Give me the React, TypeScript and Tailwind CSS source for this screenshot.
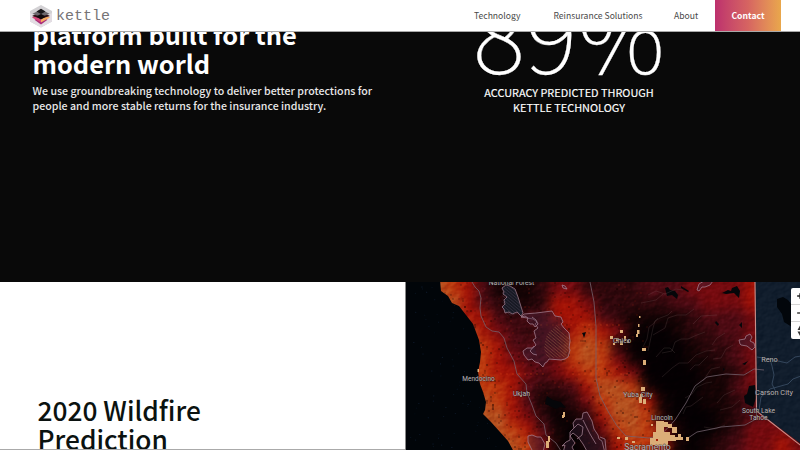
import React from "react";

const CJK = "font-['Noto_Sans_CJK_JP','Noto_Sans_CJK_SC',sans-serif]";

const LAND =
  "M440 280 L441 291 L448 296 L452 303 L459 306 L466 315 L473 324 L476 332 L479 340 L481 352 L480 362 L478 372 L480 384 L483 392 L486 402 L485 410 L483 414 L491 422 L500 432 L508 441 L514 452 L805 452 L805 447 L757 411 L755 280 Z";

const noise = (i: number) => {
  const v = Math.sin(i * 127.1 + 11.7) * 43758.5453;
  return v - Math.floor(v);
};

const stars = Array.from({ length: 100 }, (_, i) => ({
  x: 407 + noise(i) * 100,
  y: 284 + noise(i + 300) * 165,
  o: 0.15 + noise(i + 700) * 0.4,
}));

const cells = Array.from({ length: 800 }, (_, i) => ({
  x: 440 + Math.floor(noise(i + 1000) * 105) * 2,
  y: 282 + Math.floor(noise(i + 2000) * 84) * 2,
  dark: noise(i + 3000) > 0.3,
  o: 0.08 + noise(i + 4000) * 0.25,
}));

// Fire-risk raster, one letter per 15x14 cell, from black (K) to orange (o).
const SHADES: Record<string, string> = {
  K: "#040002", k: "#140304", d: "#2e070b", m: "#4d0a12",
  r: "#740a0e", R: "#a41206", O: "#bd380d", o: "#b5501e",
};
const RISK = [
  "oORmkkkdrrddddmmmrrrrRRRR",
  "ooRmdkkdRRrdddddmmrrrRRRR",
  "ooRRmdmmRRRmdkkkkdmmmrRRR",
  "oooRrmdmmRORrkKKkddmmrrrr",
  "oooORmmmmOoOdKKKKkddmrrrr",
  "oooORrmmrOoOrkKKKkkdmrrrr",
  "oooORRrmrROORrKKKKkkdrrrr",
  "oooOORmddmRooOkKKKkkmrrrr",
  "ooooORmkkdrOooRkKKkkdmrrr",
  "oooooRrdKkdRooOkKKKkdmrrr",
  "oooooORmkKkrOoOrkKKkdrrrr",
  "ooooooOrkKkdROORkKkdmrrRr",
];

const HOT: [number, number, number, number][] = [
  [638, 324, 1.5, 3], [637, 330, 2.5, 4], [636, 334, 2, 3], [610, 336, 3, 3], [620, 330, 3, 3], [613, 343, 2, 2],
  [620, 341, 3, 4], [624, 336, 2, 5], [616, 338, 2, 3], [627, 340, 2, 3], [642, 348, 4, 3], [643, 360, 3, 5], [641, 387, 4, 4],
  [639, 397, 3, 6], [643, 399, 3, 5], [640, 394, 3, 3], [656, 421, 8, 11], [653, 432, 17, 7], [650, 438, 6, 7],
  [658, 437, 18, 4], [668, 424, 4, 4], [672, 427, 5, 6], [678, 434, 3, 4], [686, 437, 3, 4], [655, 441, 13, 5],
  [669, 435, 6, 4], [675, 437, 8, 3], [664, 422, 4, 5], [651, 424, 2, 2],
  [563, 412, 2, 5], [562, 415, 2, 3], [548, 436, 2, 6], [546, 441, 3, 7], [477.5, 369, 1.5, 3], [639, 316, 1.5, 2],
  [632, 441, 3, 2], [625, 437, 3, 3], [617, 437, 3, 2], [520, 395, 2, 2],
];

const LABELS: [string, number, number, number][] = [
  ["National Forest", 511.5, 285, 6.7],
  ["Mendocino", 478.5, 381.3, 6.5],
  ["Ukiah", 521.5, 396, 6.9],
  ["Chico", 622, 343, 7.2],
  ["Yuba City", 638, 397, 7],
  ["Lincoln", 662, 420, 6.7],
  ["Sacramento", 647.5, 449.5, 8.7],
  ["Reno", 769.5, 361.5, 7.3],
  ["Carson City", 774, 395, 7.4],
  ["South Lake", 758.5, 412.5, 6.7],
  ["Tahoe", 758.5, 420, 6.7],
];

function HeatMap() {
  return (
    <svg viewBox="405 282 395 168" className="block h-[168px] w-[395px]" preserveAspectRatio="none">
      <defs>
        <clipPath id="land"><path d={LAND} /></clipPath>
        <filter id="smooth" x="-10%" y="-10%" width="120%" height="120%" colorInterpolationFilters="sRGB"><feGaussianBlur stdDeviation="5.5" /></filter>
        <filter id="relief" x="0" y="0" width="100%" height="100%" colorInterpolationFilters="sRGB">
          <feTurbulence type="fractalNoise" baseFrequency="0.13 0.16" numOctaves="4" seed="8" />
          <feDiffuseLighting lightingColor="#fff" surfaceScale="1.6"><feDistantLight azimuth="225" elevation="30" /></feDiffuseLighting>
        </filter>
        <pattern id="hatch" width="2.4" height="2.4" patternUnits="userSpaceOnUse" patternTransform="rotate(-50)">
          <path d="M0 0V2.4" stroke="#b08050" strokeWidth="0.9" />
        </pattern>
        <pattern id="hatchBlue" width="2.4" height="2.4" patternUnits="userSpaceOnUse" patternTransform="rotate(-50)">
          <path d="M0 0V2.4" stroke="#4a4358" strokeWidth="0.9" />
        </pattern>
      </defs>

      <rect x="405" y="282" width="395" height="168" fill="#010509" />
      {stars.map((s, i) => (
        <rect key={i} x={s.x} y={s.y} width="1" height="0.8" fill="#26406a" opacity={s.o} />
      ))}
      <path d="M754 280H802V450L754 410Z" fill="#0b1828" />
      <rect x="755" y="282" width="45" height="168" filter="url(#relief)" opacity=".05" />

      <g clipPath="url(#land)">
        <g filter="url(#smooth)">
          {RISK.map((row, j) =>
            row.split("").map((c, i) => (
              <rect
                key={`${i}-${j}`}
                x={i === 0 ? 400 : 430 + i * 15}
                y={j === 0 ? 256 : 282 + j * 14}
                width={i === 0 ? 46 : i === 24 ? 50 : 15.5}
                height={j === 0 ? 40.5 : j === 11 ? 40 : 14.5}
                fill={SHADES[c]}
              />
            ))
          )}
        </g>
        {cells.map((c, i) => (
          <rect key={i} x={c.x} y={c.y} width="2" height="2" fill={c.dark ? "#180201" : "#bc2410"} opacity={c.dark ? c.o : c.o * 0.5} />
        ))}
        <g fill="none" stroke="#e04b1a" strokeWidth="1.2" opacity=".4" strokeDasharray="2 4">
          <path d="M540 325H623M572 374H632M500 374H545M590 399H640" />
        </g>
        <g className="mix-blend-soft-light" opacity=".35">
          <rect x="405" y="282" width="395" height="168" filter="url(#relief)" />
        </g>
        <path d="M665 288l3-1 2 3 5 1 3 4-1 4-5-4-5 1zM681 286l8 5-1 1-7-4zM722 293l6-3 3 1 1-3 5-2 3 5-1 7-5-5-8 1zM716 321l3 3-1 2-3-3zM739 325l3-3v6zM742 364l6-3-3 4zM723 368l2 1-2 2zM546 399l1-3 6 4 8 2 5 6-6-1-4 2-11-5zM582 333l4-1-2 6-1-3z" fill="#050609" />
      </g>
      <path d="M749 386l6-1 2 10-4 12-8-4-1-7 3-2z" fill="#04070b" />
      <path d="M777 299l6-2 5 3 4 5v22l-8-5-2-8-5-7z" fill="#02060b" />

      <g fill="none" stroke="#8a7275" strokeWidth="0.6" opacity=".32">
        <path d="M658 318l-5 6-4 3-2 12-4 8M672 311l-4 4-8 3-5 3-2 7-5 23M694 309l-8 6-9 0-9 3-3 10-12 7M705 332l-8 3-9 4-7 0-6 3-3 9-10 2M715 350l-9 1-10 4-8 8-9 0-7 5-10 9M690 370l5-5h4l9-9M712 382l-6 1-9 4-5 7-7 4M703 397l-12 9-5 1-3 7M675 353l-5-5h-6l-8 9M693 324l8-8 16-1M720 367l-9 2-8 12M648 295l8-4 9 3 11-5 7 1M641 303l15-3 7-6M725 333l-8 5-5 7M733 345l-7 4-5 9-8 1M735 390l-11 5-7 8M740 400l-8 7-12 3M725 425l-10 4-11-2" />
      </g>
      <g fill="none" stroke="#75646f" strokeWidth="0.9" strokeLinejoin="round" opacity=".85">
        <path d="M472 282l3 5 4 4 2 7-1 10 1 8 5 11 6 4 7 1 5 6 3 10 7 13 3 13 9 10 1 9 5 12 4 11 8 8 2 11 10 8 5 8" />
        <path d="M590 282l4 20 2 24v52l4 18 9 17 8 13 9 10 23 2 12-3 14-15 11-17 9-17 12-9 6-1 13-2 18 1 10-6 10 1" />
        <path d="M688 438l9-6 15-3 9-2 24-2 11-6 1-11" />
        <path d="M757 357l12 2 18 4 8-6 6-1M770 359l2 7 2 9-2 9 4 8M759 410l2-13 9-8 18-5 5-5 8-3" stroke="#3f536b" />
      </g>
      <path d="M755 282l1.5 129 45 35" fill="none" stroke="#c98e8a" strokeWidth="1.1" />

      <g stroke="#a68193" strokeWidth="0.75" fill="#3a2038" fillOpacity=".4" strokeLinejoin="bevel">
        <path d="M502 288l4-3 4 1 5 3 3 8 5 16-2 3-4-4-5 2-3-2-4 1-1-4-2-2 3-3-1-4 3-3-4-3 1-2z" fill="#171a25" fillOpacity=".95" />
        <path d="M521 317l3-3 12-1 8-1 8-1 3 5 6 1 2 5-2 2 3 4 5 5 1 8-1 7 1 2-2 7-3 2-4 1-12-1-2 3-2 1-2 4-4-4-4-1-3-3-4 1-4-5-1-4 4-3 6 0 3-3-3-5 3-2-2-7 4-3-3-4 2-2-4-3z" />
        <path d="M521 317l4-1 3 2-1 3 3 3 3 0 2 3 3-3-2-4-4-3M534 346l-4 5 3 3 4 1" />
        <path d="M528 436l4-1 5 2 4 0 4 7-2 8h-10l-3-6-2-4z" />
        <path d="M566 442l4-2 0-8 4-4-1-5 3-4 6 0 1-6 4-1 5 9 2 8 4 6 1 4 3 2 3 12h-17l-5-9-5-7-5-4-3 3 5 7-3 4 3 6h-12l2-8-3 1z" />
        <path d="M574 428l4-4 5 3-1 8-5 4M583 420l7 14 6 10" fill="none" />
        <path d="M697 290l2-6 5-3h9l-3 4-5 2-3 0-3 4zM740 344l-1-4 6-1 1-3 4-2 2 3-2 4 4 2 1 4-3 3-5-4-6-1zM600 437l5 2 1 11M562 285l3 1 2 3-4-1z" />
      </g>
      <path d="M548 333l9-8 7 8 5 5-1 12-2 7-19 1-3-10 2-11z" fill="url(#hatch)" opacity=".6" />
      <path d="M502 288l8-2 5 3 8 24-15 3-5-6z" fill="url(#hatchBlue)" opacity=".8" />

      <g fill="#dcae78">
        {HOT.map(([x, y, w, h], i) => <rect key={i} x={x} y={y} width={w} height={h} />)}
      </g>

      <g textAnchor="middle" className="font-[Roboto,sans-serif]" fill="#b8b4b6" stroke="#16181c" strokeOpacity=".6" strokeWidth="0.8" paintOrder="stroke">
        {LABELS.map(([t, x, y, s]) => <text key={t} x={x} y={y} fontSize={s}>{t}</text>)}
      </g>
    </svg>
  );
}

function Logo() {
  return (
    <svg viewBox="0 0 24 24" className="h-[24px] w-[24px]">
      <path d="M12 1L23 7V17.5L12 23.5L1 17.5V7Z" fill="#d3d1d4" />
      <path d="M12 15L23 9V17.5L12 23.5L1 17.5V9Z" fill="#e3dde3" />
      <path d="M12 12L18.5 15.8L12 20.5L5.5 15.8Z" fill="#a82a78" />
      <path d="M3 13.5L12 8.5V18.5Z" fill="#d5487a" />
      <path d="M21 13.5L12 8.5V18.5Z" fill="#f4aa62" />
      <path d="M12 7.5L21 12L12 14.8L3 12Z" fill="#33151d" />
      <path d="M12 5.5L20.5 9.7L12 13L3.5 9.7Z" fill="#6c686d" />
      <path d="M12 4.8L16.5 7.5L12 10L7.5 7.5Z" fill="#1a181a" />
      <path d="M12 10L17 12.5L12 15.5L7 12.5Z" fill="#120a0d" />
    </svg>
  );
}

export default function App() {
  return (
    <div className={`relative flex h-[450px] w-[800px] flex-col overflow-hidden bg-[#090909] ${CJK}`}>
      <header className="z-10 flex h-[31px] shrink-0 items-center bg-white pl-[29px] pr-[19px] shadow-[0_1px_0_#a9a9a9]">
        <Logo />
        <span className="ml-[3px] pt-[3px] font-['Liberation_Mono',monospace] text-[15px] leading-[18px] text-[#767476]">kettle</span>
        <nav className="ml-auto flex h-full items-center text-[8.6px] leading-[13px] text-[#484848]">
          <span className="w-[79.5px] whitespace-nowrap">Technology</span>
          <span className="w-[120.5px] whitespace-nowrap">Reinsurance Solutions</span>
          <span className="w-[41px]">About</span>
          <span className="flex h-full w-[66px] items-center justify-center bg-linear-to-r from-[#bd306d] via-[#d66461] to-[#e9a74b] font-bold text-white">Contact</span>
        </nav>
      </header>

      <section className="grid h-[251px] shrink-0 grid-cols-[405px_1fr] text-white">
        <div className="pl-[32.5px]">
          <h1 className="-mt-[11px] text-[25.4px] font-bold leading-[29px]">platform built for the<br />modern world</h1>
          <p className="mt-[5px] whitespace-nowrap text-[10.62px] font-medium leading-[15px] text-[#e8e8e8]">
            We use groundbreaking technology to deliver better protections for<br />people and more stable returns for the insurance industry.
          </p>
        </div>
        <div className="w-[328px] text-center">
          <div className="-mt-[48px] h-[102px] whitespace-nowrap text-[100px] font-thin leading-[96px] [-webkit-text-stroke:0.3px_white]">89%</div>
          <p className="text-[10.9px] leading-[15px] text-white [-webkit-text-stroke:0.15px_white]">ACCURACY PREDICTED THROUGH<br />KETTLE TECHNOLOGY</p>
        </div>
      </section>

      <section className="grid h-[168px] shrink-0 grid-cols-[405px_395px]">
        <div className="overflow-hidden border-b border-[#aaaaaa] bg-white pl-[37.5px] pt-[113px]">
          <h2 className="text-[26.3px] font-medium leading-[29px] text-[#0b1210]">2020 Wildfire<br />Prediction</h2>
        </div>
        <div className="relative overflow-hidden border-l border-[#888]">
          <div className="-ml-px w-[395px]"><HeatMap /></div>
          <div className="absolute left-[385px] top-[6px] flex h-[51px] w-[17px] flex-col divide-y divide-[#d5d5d5] rounded-[2px] bg-white">
            <svg viewBox="0 0 17 17" className="h-[17px] w-[17px]"><path d="M6 8.5h6M9 5.5v6" stroke="#222" strokeWidth="1.4" /></svg>
            <svg viewBox="0 0 17 17" className="h-[17px] w-[17px]"><path d="M6 8.5h6" stroke="#222" strokeWidth="1.4" /></svg>
            <svg viewBox="0 0 17 17" className="h-[17px] w-[17px]"><path d="M9 3.5L6.5 8h5zM9 14L6.5 9.5h5z" fill="#333" /></svg>
          </div>
        </div>
      </section>
    </div>
  );
}
